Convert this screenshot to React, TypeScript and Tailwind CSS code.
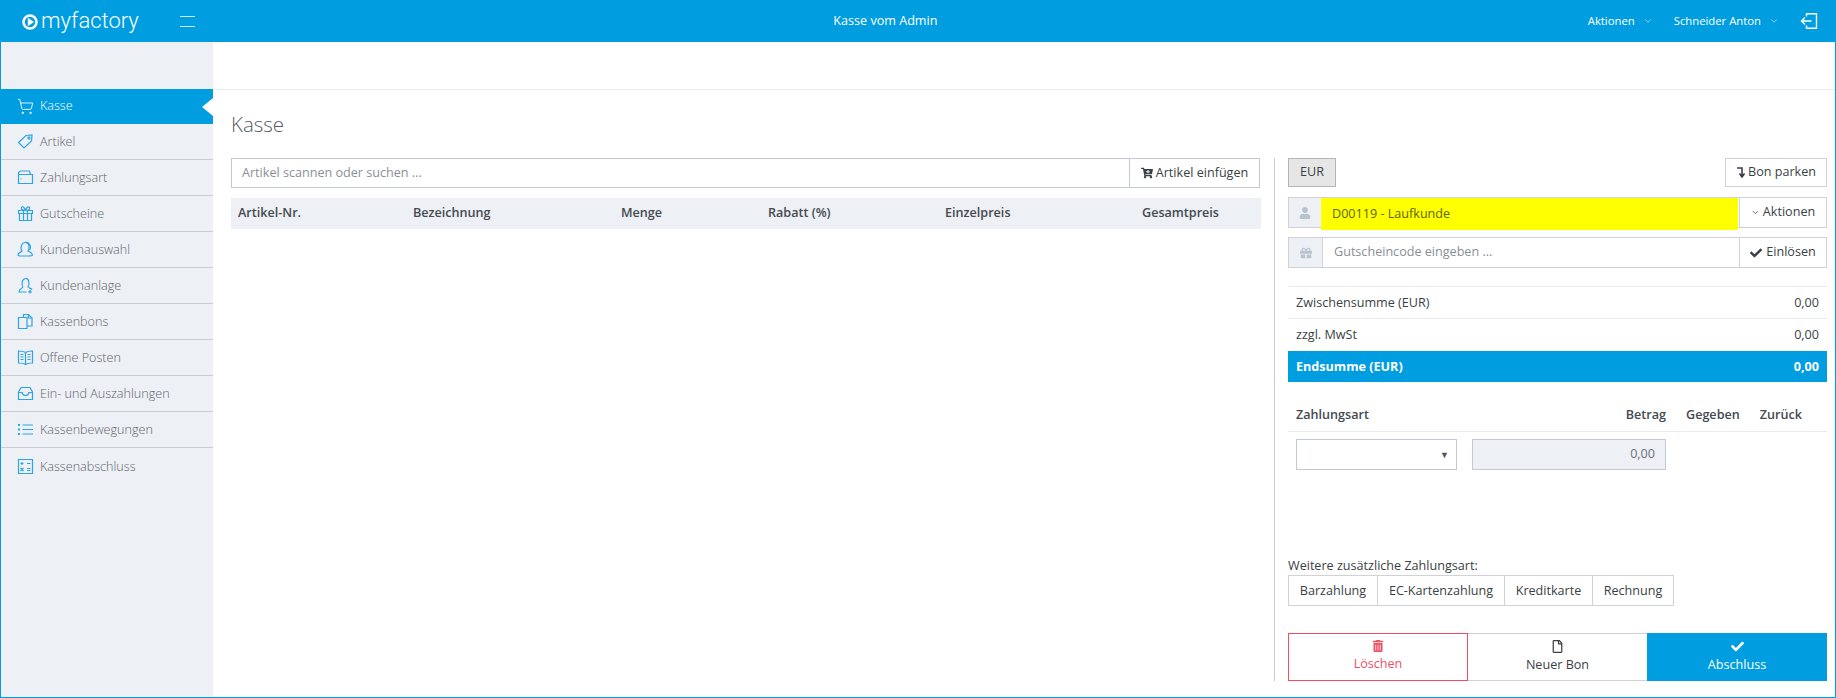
import React from 'react';
import { ChevronDown, ShoppingCart } from 'lucide-react';
import { FaCartPlus, FaCheck, FaGift, FaRegFile, FaTrashAlt, FaUser } from 'react-icons/fa';

const navIcon = { width: 17, height: 17, viewBox: '0 0 17 17', fill: 'none', stroke: 'currentColor', strokeWidth: 1.200 };

const TagIcon = () => (
    <svg {...navIcon}>
        <path d="M1.500 9.500 9 2.500l6-.5-.5 6-7.500 7z" />
        <circle cx="12" cy="5" r="1.100" />
    </svg>
);
const WalletIcon = () => (
    <svg {...navIcon}>
        <path d="M1.500 5.500h14v9h-14zM1.500 5.500V3.500l2-1.500h9l1 3.500" />
        <path d="M3.500 10h1" />
    </svg>
);
const GiftIcon = () => (
    <svg {...navIcon}>
        <path d="M1.500 5.500h14v3h-14zM2.500 8.500v7h12v-7M6.500 5.500v10M10.500 5.500v10" />
        <path d="M8.500 5.500C5 5.500 4 4 4.500 2.500S7.500 1.500 8.500 5.500c1-4 3.500-4 4-3s0 3-4 3z" />
    </svg>
);
const UsersIcon = () => (
    <svg {...navIcon}>
        <path d="M5 10c-1.500-1.500-1.500-8 3-8.500s5 6 3 8.500c1 1 4 1 4.500 4 0 1-2 1-4 1h-9c-2 0-1.500-2-.5-3 1-.7 2-.8 3-2z" />
        <path d="M8 1.500c5-1 6.500 5 4.500 7.500" />
    </svg>
);
const UserPlusIcon = () => (
    <svg {...navIcon}>
        <path d="M6 10C4.500 8 4.500 2 8.500 1.500S12.500 8 11 10c.8 1 3 1.300 4 2.500M9.500 15H2c0-3 3-3.500 4-5" />
        <path d="M13 13v3.500M11.200 14.800h3.600" />
    </svg>
);
const FilesIcon = () => (
    <svg {...navIcon}>
        <path d="M1.500 4.500h8.500v11H1.500zM6.500 4.500V1.500h5l3.500 3.500v8h-5" />
        <path d="M11.500 1.500v3.500H15" />
    </svg>
);
const BookIcon = () => (
    <svg {...navIcon}>
        <path d="M8.500 3.500C6.500 2 4 2 1.500 2v12c2.500 0 5 0 7 1.500 2-1.500 4.500-1.500 7-1.500V2c-2.500 0-5 0-7 1.500zM8.500 3.500v12" />
        <path d="M3.500 5.500h3M3.500 8h3M3.500 10.500h3M10.500 5.500h3M10.500 8h3M10.500 10.500h3" />
    </svg>
);
const InboxIcon = () => (
    <svg {...navIcon}>
        <path d="M1.500 7 4 2.500h9L15.500 7v7.500h-14zM1.500 7.500H5c.5 2 1.500 3 3.500 3s3-1 3.500-3h3.500" />
    </svg>
);
const ListIcon = () => (
    <svg {...navIcon}>
        <path d="M5.500 4h10.500M5.500 8.500h10.500M5.500 13h10.500" />
        <path d="M1 4h2M1 8.500h2M1 13h2" strokeWidth="2" />
    </svg>
);
const CalcIcon = () => (
    <svg {...navIcon}>
        <path d="M1.500 1.500h14v14h-14z" />
        <path d="M3.500 5.500h3M5 4v3M10 5.500h3.500M3.500 10l3 3M6.500 10l-3 3M10 10.500h3.500M10 12.500h3.500" />
    </svg>
);

const navItems = [
    { label: 'Artikel', icon: <TagIcon /> },
    { label: 'Zahlungsart', icon: <WalletIcon /> },
    { label: 'Gutscheine', icon: <GiftIcon /> },
    { label: 'Kundenauswahl', icon: <UsersIcon /> },
    { label: 'Kundenanlage', icon: <UserPlusIcon /> },
    { label: 'Kassenbons', icon: <FilesIcon /> },
    { label: 'Offene Posten', icon: <BookIcon /> },
    { label: 'Ein- und Auszahlungen', icon: <InboxIcon /> },
    { label: 'Kassenbewegungen', icon: <ListIcon /> },
    { label: 'Kassenabschluss', icon: <CalcIcon /> },
];

const columns = ['Artikel-Nr.', 'Bezeichnung', 'Menge', 'Rabatt (%)', 'Einzelpreis', 'Gesamtpreis'];
const extraPayments = [
    { label: 'Barzahlung', w: 'w-[90px]' },
    { label: 'EC-Kartenzahlung', w: 'w-[127px]' },
    { label: 'Kreditkarte', w: 'w-[88px]' },
    { label: 'Rechnung', w: 'w-[81px]' },
];

export default function App() {
    return (
        <div className="flex h-screen flex-col overflow-hidden bg-white font-['Open_Sans',sans-serif] text-[12.600px] text-[#3a3f45]">
            <header className="relative flex h-[42px] shrink-0 items-center bg-[#009de0] text-white">
                <div className="flex w-[180px] items-center pl-[22px]">
                    <svg width="16" height="16" viewBox="0 0 16 16" className="mt-[1px]">
                        <circle cx="8" cy="8" r="6.500" fill="none" stroke="#fff" strokeWidth="2.600" />
                        <path d="M5.800 3.800 12 8l-6.200 4.200z" fill="#fff" />
                    </svg>
                    <span className="mb-[1px] ml-[3px] font-['Roboto',sans-serif] text-[22px] leading-none font-light">myfactory</span>
                </div>
                <div className="flex w-[15px] flex-col gap-[9px]">
                    <div className="h-px bg-white/80" />
                    <div className="h-px bg-white/80" />
                </div>
                <div className="flex-1 pr-[12px] text-center text-[12.600px]">Kasse vom Admin</div>
                <div className="flex items-center pr-[18px] text-[11.300px]">
                    <span>Aktionen</span>
                    <ChevronDown size={10} className="ml-[8px] text-white/70" />
                    <span className="ml-[21px]">Schneider Anton</span>
                    <ChevronDown size={10} className="ml-[8px] text-white/70" />
                    <svg width="18" height="18" viewBox="0 0 18 18" fill="none" stroke="#fff" strokeWidth="1.400" className="ml-[21px]">
                        <path d="M6.500 4.500V1.700h10v14.600h-10v-2.800M11.500 9H1.500M5 5.500 1.500 9 5 12.500" />
                    </svg>
                </div>
            </header>

            <div className="flex min-h-0 flex-1 border-x border-b border-[#009de0]">
                <aside className="w-[212px] shrink-0 bg-[#edf0f4] pt-[47px]">
                    <div className="relative flex h-[35px] items-center bg-[#009de0] pl-[16px] text-white">
                        <ShoppingCart size={17} strokeWidth={1.250} />
                        <span className="ml-[6px] font-light">Kasse</span>
                        <div className="absolute top-[9px] right-0 border-y-[9px] border-r-[11px] border-y-transparent border-r-white" />
                    </div>
                    {navItems.map((item, idx) => (
                        <div
                            key={item.label}
                            className={`flex h-[36px] items-center pl-[16px] text-[#5f656c] ${idx < navItems.length - 1 ? 'border-b border-[#c9cdd1]' : ''}`}
                        >
                            <span className="text-[#2ea3e6]">{item.icon}</span>
                            <span className="ml-[6px] pt-[2px] font-light">{item.label}</span>
                        </div>
                    ))}
                </aside>

                <main className="flex min-w-0 flex-1 flex-col">
                    <div className="h-[48px] shrink-0 border-b border-[#e8eaed]" />
                    <h1 className="flex h-[68px] shrink-0 items-center pl-[18px] text-[20.500px] font-light text-[#555a60]">Kasse</h1>

                    <div className="flex flex-1 pl-[18px]">
                        <section className="w-[1030px] shrink-0">
                            <div className="flex h-[30px] w-[1029px] border border-[#c5c9d6]">
                                <input
                                    className="min-w-0 flex-1 bg-white px-[10px] outline-none placeholder:text-[#8a8f96]"
                                    placeholder="Artikel scannen oder suchen ..."
                                />
                                <button className="flex w-[130px] items-center justify-center gap-[3px] border-l border-[#c5c9d6]">
                                    <FaCartPlus size={12} />
                                    Artikel einfügen
                                </button>
                            </div>
                            <div className="mt-[10px] grid h-[31px] grid-cols-[175px_208px_147px_177px_197px_1fr] items-center bg-[#edf0f4] pl-[7px] font-semibold text-[#444a50]">
                                {columns.map((c) => (
                                    <div key={c}>{c}</div>
                                ))}
                            </div>
                        </section>

                        <section className="mb-[16px] ml-[13px] flex w-[553px] shrink-0 flex-col border-l border-[#c9cdd1] pl-[13px]">
                            <div className="flex h-[29px] items-stretch justify-between">
                                <button className="w-[48px] border border-[#b5b5b5] bg-[#e6e6e6]">EUR</button>
                                <button className="flex w-[102px] items-center justify-center gap-[3px] border border-[#cfd2d6]">
                                    <svg width="9" height="11" viewBox="0 0 9 11" fill="none" stroke="#3a3f45" strokeWidth="1.600">
                                        <path d="M1 1h5v8M3.500 6.500 6 10l2.500-3.500" />
                                    </svg>
                                    Bon parken
                                </button>
                            </div>

                            <div className="relative mt-[10px] flex h-[31px] w-[539px] border border-[#cfd2d6]">
                                <div className="flex w-[32px] items-center justify-center bg-[#edf0f4] text-[#b9c3d0]">
                                    <FaUser size={12} />
                                </div>
                                <div className="h-[32px] w-[417px] bg-[#ffff00] pl-[11px] leading-[31px] text-[#5d6600]">D00119 - Laufkunde</div>
                                <button className="ml-auto flex w-[87px] items-center justify-center gap-[3px] border-l border-[#cfd2d6]">
                                    <ChevronDown size={9} />
                                    Aktionen
                                </button>
                            </div>

                            <div className="mt-[9px] flex h-[31px] w-[539px] border border-[#cfd2d6]">
                                <div className="flex w-[34px] items-center justify-center border-r border-[#cfd2d6] bg-[#edf0f4] text-[#b9c3d0]">
                                    <FaGift size={12} />
                                </div>
                                <input
                                    className="min-w-0 flex-1 bg-white px-[11px] outline-none placeholder:text-[#8a8f96]"
                                    placeholder="Gutscheincode eingeben ..."
                                />
                                <button className="flex w-[87px] items-center justify-center gap-[4px] border-l border-[#cfd2d6]">
                                    <FaCheck size={12} />
                                    Einlösen
                                </button>
                            </div>

                            <div className="mt-[18px] w-[539px] border-t border-[#e8eaed]">
                                <div className="flex h-[32px] items-center justify-between border-b border-[#e8eaed] px-[8px] pt-[2px]">
                                    <span>Zwischensumme (EUR)</span>
                                    <span>0,00</span>
                                </div>
                                <div className="flex h-[32px] items-center justify-between px-[8px]">
                                    <span>zzgl. MwSt</span>
                                    <span>0,00</span>
                                </div>
                                <div className="flex h-[31px] items-center justify-between bg-[#009de0] px-[8px] pt-[2px] font-bold text-white">
                                    <span>Endsumme (EUR)</span>
                                    <span>0,00</span>
                                </div>
                            </div>

                            <div className="mt-[25px] flex h-[16px] w-[539px] items-center font-semibold text-[#444a50]">
                                <span className="ml-[8px] w-[327px]">Zahlungsart</span>
                                <span className="w-[43px] text-right">Betrag</span>
                                <span className="ml-[20px]">Gegeben</span>
                                <span className="ml-[20px]">Zurück</span>
                            </div>
                            <div className="mt-[8px] w-[539px] border-t border-[#e8eaed]" />
                            <div className="mt-[7px] flex h-[31px] pl-[8px]">
                                <div className="flex w-[161px] items-center justify-end border border-[#c5c9d6] pr-[7px] text-[9px] text-[#555]">▼</div>
                                <div className="ml-[15px] flex w-[194px] items-center justify-end border border-[#c5c9d6] bg-[#edf0f4] pr-[10px] text-[#6b7178]">0,00</div>
                            </div>

                            <div className="mt-auto">
                                <div className="pt-px leading-[18px]">Weitere zusätzliche Zahlungsart:</div>
                                <div className="flex h-[31px]">
                                    {extraPayments.map((p, idx) => (
                                        <button key={p.label} className={`${p.w} border-y border-r border-[#cfd2d6] pt-[2px] ${idx === 0 ? 'border-l' : ''}`}>
                                            {p.label}
                                        </button>
                                    ))}
                                </div>
                                <div className="mt-[27px] flex h-[48px]">
                                    <button className="flex w-[180px] flex-col items-center justify-center gap-[3px] border border-[#ef4f62] text-[#ef4f62]">
                                        <FaTrashAlt size={12} />
                                        Löschen
                                    </button>
                                    <button className="flex w-[179px] flex-col items-center justify-center gap-[3px] border-y border-[#cfd2d6]">
                                        <FaRegFile size={13} />
                                        Neuer Bon
                                    </button>
                                    <button className="flex w-[180px] flex-col items-center justify-center gap-[3px] bg-[#009de0] text-white">
                                        <FaCheck size={13} />
                                        Abschluss
                                    </button>
                                </div>
                            </div>
                        </section>
                    </div>
                </main>
            </div>
        </div>
    );
}
